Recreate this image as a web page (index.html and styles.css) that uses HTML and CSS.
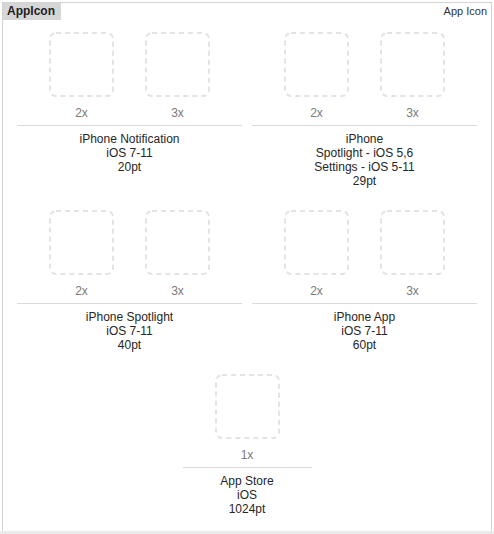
FILE: index.html
```html
<!DOCTYPE html>
<html lang="en">
<head>
    <meta charset="UTF-8">
    <title>AppIcon</title>
    <link rel="stylesheet" href="styles.css">
</head>
<body>
    <div class="panel">
        <div class="header">
            <span class="tab">AppIcon</span>
            <span class="kind">App Icon</span>
        </div>

        <div class="rows">
            <!-- 第一行 -->
            <div class="row">
                <div class="cell">
                    <div class="slots">
                        <div class="slot">
                            <svg class="well" width="65" height="65"><rect x="1" y="1" width="63" height="63" rx="6" /></svg>
                            <div class="scale">2x</div>
                        </div>
                        <div class="slot">
                            <svg class="well" width="65" height="65"><rect x="1" y="1" width="63" height="63" rx="6" /></svg>
                            <div class="scale">3x</div>
                        </div>
                    </div>
                    <div class="info">
                        iPhone Notification<br>iOS 7-11<br>20pt
                    </div>
                </div>
                <div class="cell">
                    <div class="slots">
                        <div class="slot">
                            <svg class="well" width="65" height="65"><rect x="1" y="1" width="63" height="63" rx="6" /></svg>
                            <div class="scale">2x</div>
                        </div>
                        <div class="slot">
                            <svg class="well" width="65" height="65"><rect x="1" y="1" width="63" height="63" rx="6" /></svg>
                            <div class="scale">3x</div>
                        </div>
                    </div>
                    <div class="info">
                        iPhone<br>Spotlight - iOS 5,6<br>Settings - iOS 5-11<br>29pt
                    </div>
                </div>
            </div>

            <!-- 第二行 -->
            <div class="row">
                <div class="cell">
                    <div class="slots">
                        <div class="slot">
                            <svg class="well" width="65" height="65"><rect x="1" y="1" width="63" height="63" rx="6" /></svg>
                            <div class="scale">2x</div>
                        </div>
                        <div class="slot">
                            <svg class="well" width="65" height="65"><rect x="1" y="1" width="63" height="63" rx="6" /></svg>
                            <div class="scale">3x</div>
                        </div>
                    </div>
                    <div class="info">
                        iPhone Spotlight<br>iOS 7-11<br>40pt
                    </div>
                </div>
                <div class="cell">
                    <div class="slots">
                        <div class="slot">
                            <svg class="well" width="65" height="65"><rect x="1" y="1" width="63" height="63" rx="6" /></svg>
                            <div class="scale">2x</div>
                        </div>
                        <div class="slot">
                            <svg class="well" width="65" height="65"><rect x="1" y="1" width="63" height="63" rx="6" /></svg>
                            <div class="scale">3x</div>
                        </div>
                    </div>
                    <div class="info">
                        iPhone App<br>iOS 7-11<br>60pt
                    </div>
                </div>
            </div>

            <!-- 第三行 -->
            <div class="row">
                <div class="cell">
                    <div class="slots">
                        <div class="slot">
                            <svg class="well" width="65" height="65"><rect x="1" y="1" width="63" height="63" rx="6" /></svg>
                            <div class="scale">1x</div>
                        </div>
                    </div>
                    <div class="info">
                        App Store<br>iOS<br>1024pt
                    </div>
                </div>
            </div>
        </div>
    </div>
    <div class="strip"></div>
</body>
</html>
```

FILE: styles.css
```css
/* 页面基础 */
body {
    margin: 0;
    background: #fff;
    font-family: "Liberation Sans", Arial, sans-serif;
    color: #262626;
}
/* 外框 */
.panel {
    margin: 2px 2px 0 2px;
    height: 528px;
    border: 1px solid #d3d3d3;
    border-bottom: none;
}
/* 底部灰条 */
.strip {
    height: 3px;
    background: #ececec;
}
/* 标题栏 */
.header {
    display: flex;
    justify-content: space-between;
    align-items: flex-start;
}
.tab {
    background: #d6d6d6;
    font-size: 12px;
    font-weight: bold;
    line-height: 17px;
    padding: 0 6px 0 4px;
    color: #222;
}
.kind {
    font-size: 11px;
    line-height: 17px;
    padding-right: 4px;
    color: #333;
}
/* 图标行 */
.rows {
    display: flex;
    flex-direction: column;
    gap: 22px;
    padding-top: 12px;
}
.row {
    display: flex;
    justify-content: center;
    gap: 10px;
}
.cell {
    display: flex;
    flex-direction: column;
}
.slots {
    display: flex;
    gap: 31px;
    padding: 0 32px 5px;
    border-bottom: 1px solid #dadada;
}
.slot {
    display: flex;
    flex-direction: column;
    align-items: center;
}
.well {
    display: block;
}
.well rect {
    fill: none;
    stroke: #e3e3e3;
    stroke-width: 2;
    stroke-dasharray: 5 4;
}
.scale {
    margin-top: 9px;
    font-size: 12px;
    line-height: 14px;
    color: #7a7a7a;
}
.info {
    padding-top: 6px;
    font-size: 12px;
    line-height: 14px;
    text-align: center;
}
```
